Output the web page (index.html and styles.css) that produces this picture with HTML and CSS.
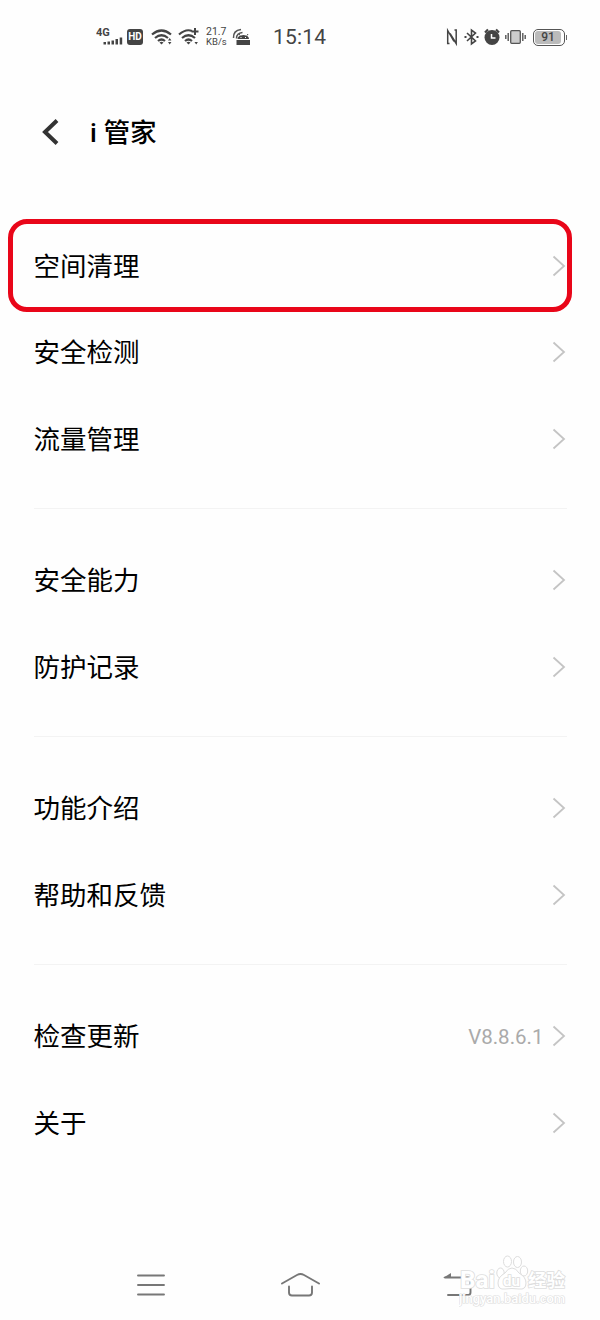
FILE: index.html
```html
<!DOCTYPE html>
<html lang="zh-CN">
<head>
  <meta charset="UTF-8">
  <meta name="viewport" content="width=device-width, initial-scale=1.0">
  <title>i 管家</title>
  <link rel="stylesheet" href="styles.css">
</head>
<body>
  <div class="status-bar">
    <div class="status-left">
      <svg class="signal" width="27" height="22" viewBox="0 0 27 22">
        <text x="0" y="10" class="net-type">4G</text>
        <path d="M7.500 16h2.500v2.500H7.500zM11.500 15.500h2.500v3h-2.500zM15.500 14.500h2.500v4h-2.500zM19.500 13h2.500v5.500h-2.500zM23.700 11.500h2.500v7h-2.500z" fill="#444"/>
      </svg>
      <span class="hd">HD</span>
      <svg class="wifi" width="22" height="22" viewBox="0 0 22 22">
        <path d="M1 8.500q9.500-8 19 0M4 12q6.500-5.500 13 0M7 15q3.500-3 7 0" fill="none" stroke="#444" stroke-width="2.200"/>
        <path d="M8.500 16.500q2-1.500 4 0l-2 2zM17 14.500l1.700-2.500 1.700 2.500zM17 16l1.700 2.500 1.700-2.500z" fill="#444"/>
      </svg>
      <svg class="wifi2" width="22" height="22" viewBox="0 0 22 22">
        <path d="M1 8.500q7-6 13-3.500M4 12q6.500-5.500 13 0M7 15q3.500-3 7 0" fill="none" stroke="#444" stroke-width="2.200"/>
        <path d="M8.500 16.500q2-1.500 4 0l-2 2zM16.500 16l1.700 2.500 1.700-2.500z" fill="#444"/>
        <path d="M17 2v7M13.500 5.500h7" stroke="#444" stroke-width="2"/>
      </svg>
      <span class="speed">21.7<br>KB/s</span>
      <svg class="robot" width="20" height="22" viewBox="0 0 20 22">
        <path d="M1.500 12Q1 4.500 9 3.500M4.500 12.500q0-5.500 6-6" fill="none" stroke="#555" stroke-width="1.500"/>
        <path d="M5.500 13q0-3.500 6-4 5.500.5 5.500 4zM4.500 14h13.500v5H4.500z" fill="#444"/>
        <path d="M8 9.500l-1-1.500M15 9.500l1-1.500" stroke="#444"/>
        <path d="M8.500 11.500h1M13 11.500h1" stroke="#fff"/>
      </svg>
      <span class="time">15:14</span>
    </div>
    <div class="status-right">
      <svg width="12" height="22" viewBox="0 0 12 22">
        <path d="M3.500 17.500H1.700V4.500L8 15.500M8.500 4h1.700v13.500L4 7.500" fill="none" stroke="#444" stroke-width="1.500"/>
      </svg>
      <svg class="bluetooth" width="15" height="22" viewBox="0 0 15 22">
        <path d="M3 7l8.500 8-4 3v-14l4 3L3 15" fill="none" stroke="#444" stroke-width="1.600"/>
        <path d="M.5 11h2M12.500 11h2" stroke="#444" stroke-width="2"/>
      </svg>
      <svg class="alarm" width="16" height="22" viewBox="0 0 16 22">
        <circle cx="8" cy="11.500" r="7.500" fill="#444"/>
        <path d="M1 6.500l3-3M15 6.500l-3-3" stroke="#444" stroke-width="2.200"/>
        <path d="M7.500 8v4h4" fill="none" stroke="#fff" stroke-width="1.500"/>
      </svg>
      <svg class="vibrate" width="21" height="22" viewBox="0 0 21 22">
        <rect x="5.700" y="4.700" width="9.600" height="12.600" rx="1" fill="#ccc" stroke="#555" stroke-width="1.300"/>
        <path d="M3.200 7v8M17.800 7v8M.8 9v4M20.200 9v4" stroke="#555" stroke-width="1.400"/>
      </svg>
      <span class="battery"><span class="level">91</span></span>
    </div>
  </div>

  <header class="title-bar">
    <svg width="20" height="28" viewBox="0 0 20 28">
      <path d="M17 2.500L5 14l12 11.500" fill="none" stroke="#333" stroke-width="4"/>
    </svg>
    <h1>i 管家</h1>
  </header>

  <main class="menu">
    <section class="group">
      <div class="row marked"><span>空间清理</span><svg class="arrow" viewBox="0 0 14 22"><path d="M1.500 1.500L12 11 1.500 20.500"/></svg></div>
      <div class="row"><span>安全检测</span><svg class="arrow" viewBox="0 0 14 22"><path d="M1.500 1.500L12 11 1.500 20.500"/></svg></div>
      <div class="row"><span>流量管理</span><svg class="arrow" viewBox="0 0 14 22"><path d="M1.500 1.500L12 11 1.500 20.500"/></svg></div>
    </section>
    <section class="group">
      <div class="row"><span>安全能力</span><svg class="arrow" viewBox="0 0 14 22"><path d="M1.500 1.500L12 11 1.500 20.500"/></svg></div>
      <div class="row"><span>防护记录</span><svg class="arrow" viewBox="0 0 14 22"><path d="M1.500 1.500L12 11 1.500 20.500"/></svg></div>
    </section>
    <section class="group">
      <div class="row"><span>功能介绍</span><svg class="arrow" viewBox="0 0 14 22"><path d="M1.500 1.500L12 11 1.500 20.500"/></svg></div>
      <div class="row"><span>帮助和反馈</span><svg class="arrow" viewBox="0 0 14 22"><path d="M1.500 1.500L12 11 1.500 20.500"/></svg></div>
    </section>
    <section class="group">
      <div class="row"><span>检查更新</span><span class="version">V8.8.6.1</span><svg class="arrow" viewBox="0 0 14 22"><path d="M1.500 1.500L12 11 1.500 20.500"/></svg></div>
      <div class="row"><span>关于</span><svg class="arrow" viewBox="0 0 14 22"><path d="M1.500 1.500L12 11 1.500 20.500"/></svg></div>
    </section>
  </main>

  <nav class="nav-bar">
    <svg width="28" height="24" viewBox="0 0 28 24">
      <path d="M1 2.500h26M1 12h26M1 21.500h26"/>
    </svg>
    <svg class="home" width="40" height="26" viewBox="0 0 40 26">
      <path d="M2 11.500L17 3q3.500-2 7 0l15 8.500M9 14.500v6q0 3 3 3h17q3 0 3-3v-6"/>
    </svg>
    <svg class="back" width="30" height="26" viewBox="0 0 30 26">
      <path d="M2 5.500h23q2.500 0 2.500 2.500V20.500q0 2.500-2.500 2.500H5"/>
      <path class="tip" d="M0 6L8 1v5z"/>
    </svg>
  </nav>

  <div class="watermark">
    <svg width="112" height="54" viewBox="0 0 112 54">
      <text x="1" y="34" class="bai" textLength="35" lengthAdjust="spacingAndGlyphs">Bai</text>
      <ellipse cx="41.500" cy="19" rx="3.700" ry="5"/>
      <ellipse cx="48.500" cy="7.500" rx="4" ry="5.500"/>
      <ellipse cx="58.500" cy="8" rx="4" ry="5.500"/>
      <ellipse cx="65" cy="17" rx="3.700" ry="5"/>
      <path d="M53 14q4 0 7 5 7 4 7 10 0 7-7 6-7-1-14 0-7 1-7-6 0-6 7-10 3-5 7-5z"/>
      <text x="44" y="32" class="du">du</text>
      <text x="69" y="33" class="jingyan" textLength="37">经验</text>
      <text x="0" y="49" class="site" textLength="106" lengthAdjust="spacingAndGlyphs">jingyan.baidu.com</text>
    </svg>
  </div>
</body>
</html>
```

FILE: styles.css
```css
* {
  box-sizing: border-box;
}
body {
  position: relative;
  width: 600px;
  height: 1320px;
  margin: 0;
  overflow: hidden;
  background: #fefefe;
  color: #000;
  font-family: Roboto, "Noto Sans CJK SC", sans-serif;
}
svg {
  display: block;
  flex: none;
}

/* status bar */
.status-bar {
  display: flex;
  justify-content: space-between;
  height: 74px;
  padding: 0 33px 0 96px;
  color: #444;
}
.status-left,
.status-right {
  display: flex;
  align-items: center;
}
.net-type {
  font: bold 11px Roboto, sans-serif;
  fill: #444;
}
.hd {
  width: 16px;
  height: 16px;
  margin-left: 4px;
  border-radius: 3px;
  background: #444;
  color: #fff;
  font-size: 10px;
  font-weight: bold;
  line-height: 16px;
  text-align: center;
}
.wifi {
  margin-left: 8px;
}
.wifi2 {
  margin-left: 5px;
}
.speed {
  width: 22px;
  margin-left: 6px;
  font-size: 9.5px;
  line-height: 10px;
  white-space: nowrap;
}
.speed::first-line {
  font-size: 10.5px;
}
.robot {
  margin-left: 4px;
}
.time {
  margin-left: 21px;
  font-size: 21px;
  letter-spacing: 0.2px;
}
.bluetooth {
  margin-left: 6px;
}
.alarm {
  margin-left: 5px;
}
.vibrate {
  margin-left: 5px;
}
.battery {
  position: relative;
  width: 32px;
  height: 17px;
  margin: 0 2px 0 7px;
  padding: 1px;
  border: 1px solid #555;
  border-radius: 5px;
}
.battery::after {
  content: "";
  position: absolute;
  top: 5px;
  right: -3px;
  width: 1px;
  height: 5px;
  background: #666;
}
.level {
  display: block;
  width: 26px;
  height: 13px;
  border-radius: 3px;
  background: #bbb;
  font-size: 12px;
  font-weight: 500;
  line-height: 13px;
  text-align: center;
}

/* title */
.title-bar {
  display: flex;
  align-items: center;
  height: 116px;
  padding-left: 40px;
}
.title-bar h1 {
  margin: 0 0 0 30px;
  padding-top: 2px;
  font-size: 26.6px;
  font-weight: 500;
  line-height: 36px;
}

/* menu list */
.menu {
  padding: 32.5px 33.5px 0 33.5px;
}
.group {
  padding-bottom: 26px;
  border-bottom: 1px solid #f3f3f3;
}
.group + .group {
  padding-top: 28px;
}
.group:last-child {
  border-bottom: none;
}
.row {
  display: flex;
  align-items: center;
  position: relative;
  height: 86.5px;
  font-size: 26.5px;
}
.row span {
  padding-top: 2px;
  line-height: 36px;
}
.arrow {
  width: 14px;
  height: 22px;
  margin-left: auto;
  margin-right: 1px;
  fill: none;
  stroke: #c4c4c4;
  stroke-width: 1.8;
}
.row .version {
  margin-left: auto;
  padding-top: 1px;
  color: #aaa;
  font-size: 20.5px;
}
.version + .arrow {
  margin-left: 8px;
}
.marked::before {
  content: "";
  position: absolute;
  top: -3.5px;
  left: -25.5px;
  box-sizing: border-box;
  width: 564px;
  height: 93px;
  border: 5px solid #e90619;
  border-radius: 19px;
}

/* bottom navigation */
.nav-bar {
  position: absolute;
  bottom: 22px;
  left: 0;
  display: flex;
  align-items: center;
  width: 100%;
  padding-left: 137px;
}
.nav-bar .home {
  margin-left: 115px;
}
.nav-bar .back {
  margin-left: 123px;
}
.nav-bar path {
  fill: none;
  stroke: #777;
  stroke-width: 1.9;
  stroke-linecap: round;
}
.nav-bar .tip {
  fill: #777;
  stroke: none;
}

/* watermark */
.watermark {
  position: absolute;
  top: 1254px;
  left: 459px;
}
.watermark svg {
  fill: #fff;
  stroke: #ddd;
  stroke-width: 1;
}
.watermark text {
  font-weight: bold;
  stroke-width: 1.6;
  paint-order: stroke;
}
.bai {
  font-size: 24px;
}
.du {
  font-size: 15px;
}
.jingyan {
  font-size: 18.5px;
}
.watermark .site {
  font-size: 12px;
  font-weight: 500;
  stroke-width: 1.2;
}
```
